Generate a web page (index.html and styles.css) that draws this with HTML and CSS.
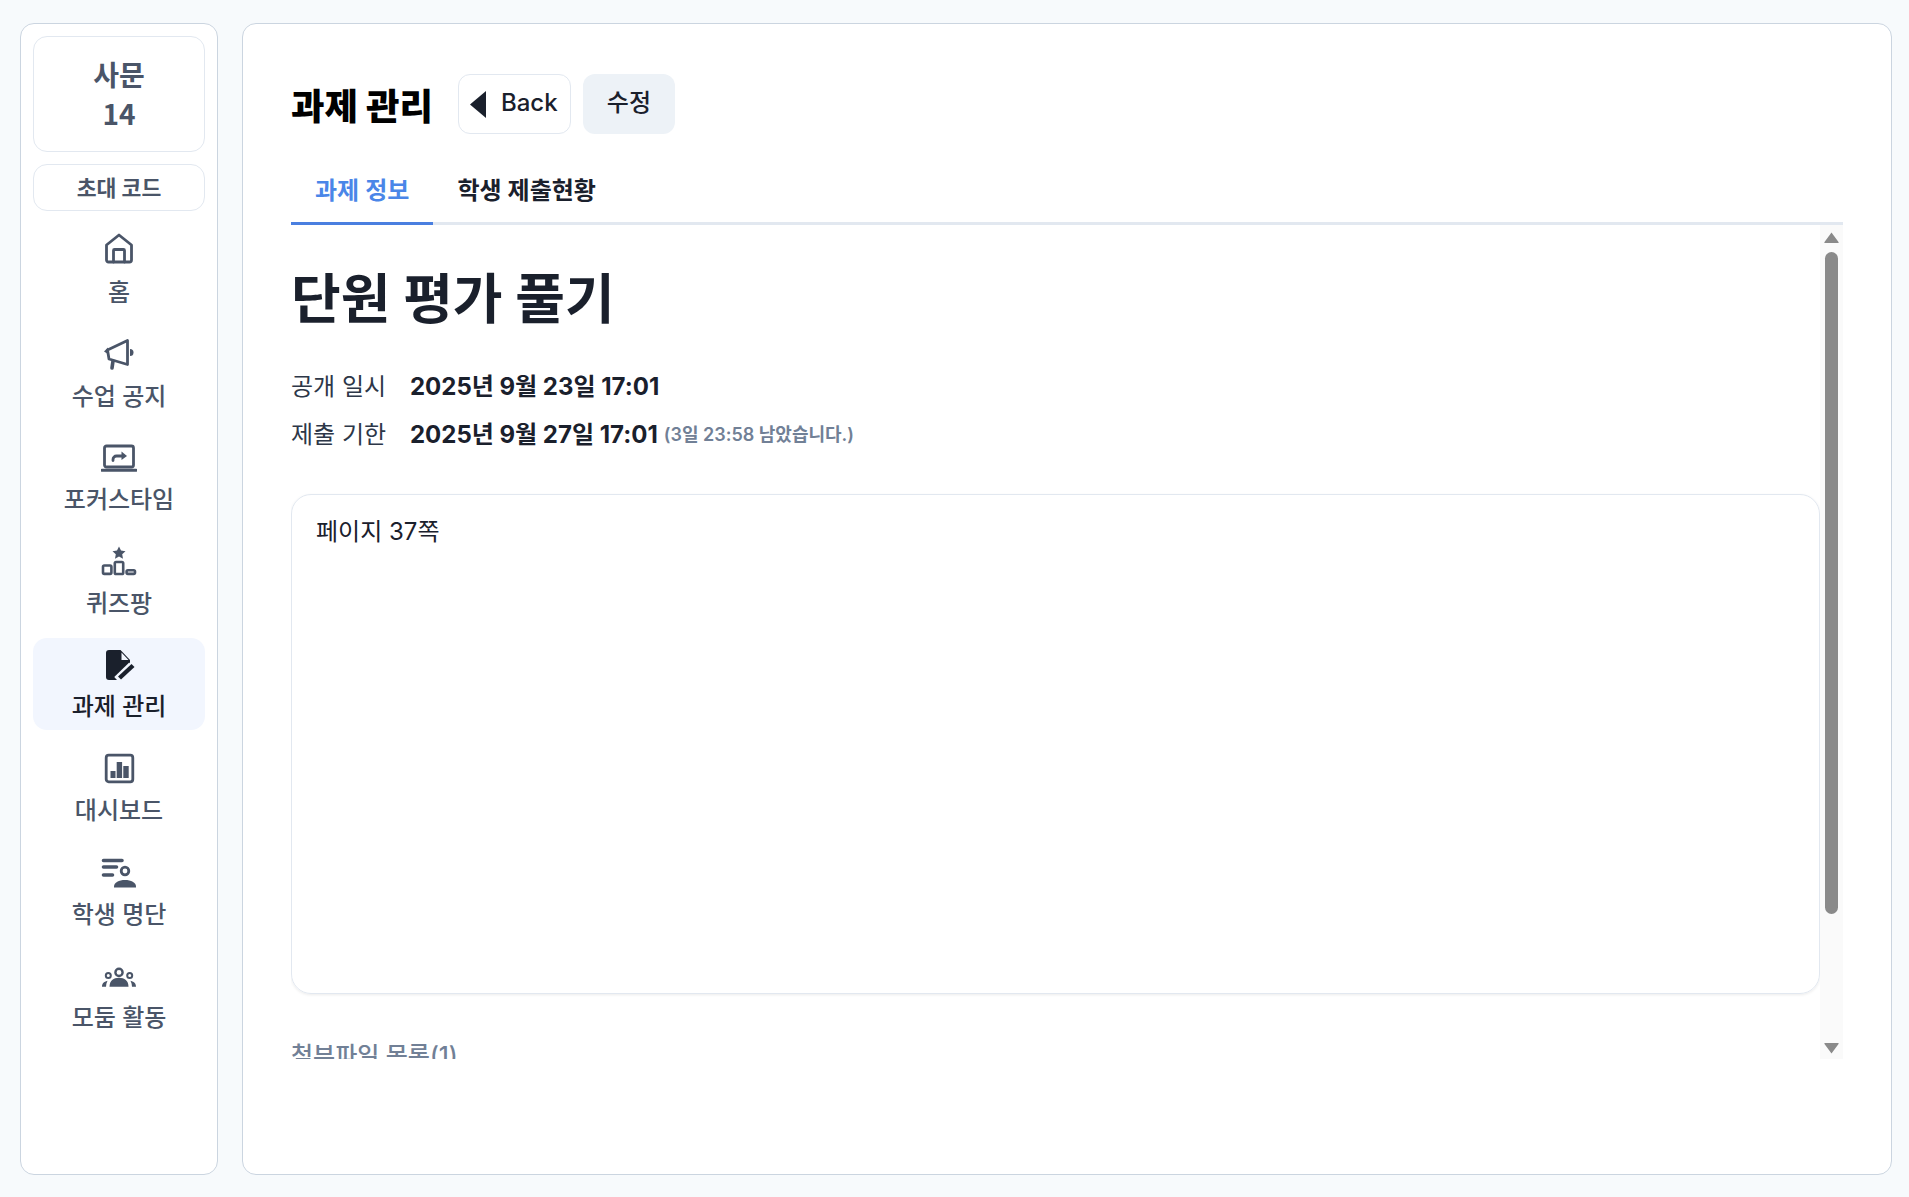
FILE: index.html
```html
<!DOCTYPE html>
<html lang="ko">

<head>
  <meta charset="UTF-8">
  <meta name="viewport" content="width=device-width, initial-scale=1.0">
  <title>과제 관리</title>
  <link rel="stylesheet" href="styles.css">
</head>

<body>
  <div class="layout">
    <aside class="sidebar">
      <div class="class-card">사문<br>14</div>
      <div class="code-card">초대 코드</div>
      <nav class="nav">
        <a class="nav-item">
          <svg class="nav-icon line" viewBox="0 0 36 36">
            <path d="M18 2 L30.5 12 V27 a2 2 0 0 1-2 2 H7.5 a2 2 0 0 1-2-2 V12 Z" />
            <path d="M12.5 29 V17.5 a1 1 0 0 1 1-1 h9 a1 1 0 0 1 1 1 V29" />
          </svg>
          <span>홈</span>
        </a>
        <a class="nav-item">
          <svg class="nav-icon line" viewBox="0 0 36 36">
            <path d="M6.5 13 L26.5 3.5 V27.5 L8 22 Z" />
            <path d="M12 24 L11 31" stroke-width="3.6" />
            <path class="solid" d="M7 10.5 L3 14.5 L7 17 Z" />
            <path class="solid" d="M29 12 a3.5 3.5 0 0 1 0 7 Z" />
          </svg>
          <span>수업 공지</span>
        </a>
        <a class="nav-item">
          <svg class="nav-icon line" viewBox="0 0 36 36">
            <rect x="3.5" y="6" width="29" height="21" rx="2" />
            <path d="M1 30.3 H35" stroke-width="3" />
            <path d="M12 20.5 v-1 a3.5 3.5 0 0 1 3.5-3.5 H21" />
            <path class="solid" d="M20.5 11.5 L26 16 L20.5 20 Z" />
          </svg>
          <span>포커스타임</span>
        </a>
        <a class="nav-item">
          <svg class="nav-icon line" viewBox="0 0 36 36">
            <path class="solid" d="M18 2.5 L20 6.6 L24.5 7.2 L21.2 10.3 L22 14.8 L18 12.6 L14 14.8 L14.8 10.3 L11.5 7.2 L16 6.6 Z" />
            <g stroke-width="2.6">
              <rect x="2" y="21.5" width="8.4" height="8.4" rx="1.3" />
              <rect x="13.8" y="18" width="8.4" height="12" rx="1.3" />
              <rect x="25.6" y="26.3" width="8.4" height="3.6" rx="1.3" />
            </g>
          </svg>
          <span>퀴즈팡</span>
        </a>
        <a class="nav-item active">
          <svg class="nav-icon" viewBox="0 0 36 36">
            <path d="M8 3 H19.5 L29 13 V20 L16 33 H8 a3 3 0 0 1-3-3 V6 a3 3 0 0 1 3-3 Z" />
            <path class="fold" d="M20.5 5.5 L27.5 13 H20.5 Z" />
            <path class="pen-gap" d="M16 33 L31 18.5" />
            <path class="pen" d="M18.5 31 L32 18.5" />
          </svg>
          <span>과제 관리</span>
        </a>
        <a class="nav-item">
          <svg class="nav-icon line" viewBox="0 0 36 36">
            <rect x="5.2" y="4.2" width="26.6" height="26.6" rx="2.5" />
            <path class="solid" d="M9.5 20 h5 v7 h-5 Z M15.7 11 h5.4 v16 h-5.4 Z M22.3 15 h5.4 v12 h-5.4 Z" />
          </svg>
          <span>대시보드</span>
        </a>
        <a class="nav-item">
          <svg class="nav-icon line" viewBox="0 0 36 36">
            <path d="M2.5 5.5 H21 M2.5 12 H15.5 M2.5 20 H11.5" stroke-width="3.6" />
            <circle cx="24" cy="16" r="3.8" />
            <path class="solid" d="M13 32.4 v-1 c0-4 5-6.5 11-6.5 s11 2.5 11 6.5 v1 Z" />
          </svg>
          <span>학생 명단</span>
        </a>
        <a class="nav-item">
          <svg class="nav-icon line" viewBox="0 0 36 36">
            <circle cx="18" cy="14.4" r="3.6" stroke-width="2.4" />
            <circle cx="7.3" cy="17.6" r="2.5" stroke-width="2" />
            <circle cx="28.7" cy="17.6" r="2.5" stroke-width="2" />
            <path class="solid" d="M8.5 28.7 c0-6 4-9 9.5-9 s9.5 3 9.5 9 Z" />
            <path class="solid" d="M1 28.7 c0-3 1.5-5 5.5-6 c-1 2-1.5 4-1.5 6 Z M35 28.7 c0-3-1.5-5-5.5-6 c1 2 1.5 4 1.5 6 Z" />
          </svg>
          <span>모둠 활동</span>
        </a>
      </nav>
    </aside>

    <main class="panel">
      <div class="panel-header">
        <h2>과제 관리</h2>
        <button class="btn btn-back">
          <svg class="back-icon" viewBox="0 0 16 27"><path d="M16 0 V27 L0 13.5 Z" /></svg>
          Back
        </button>
        <button class="btn btn-edit">수정</button>
      </div>

      <div class="tabs">
        <div class="tab active">과제 정보</div>
        <div class="tab">학생 제출현황</div>
      </div>

      <div class="tab-body">
        <div class="scroll">
          <h1>단원 평가 풀기</h1>
          <div class="date-row">
            <span class="date-label">공개 일시</span>
            <b>2025년 9월 23일 17:01</b>
          </div>
          <div class="date-row">
            <span class="date-label">제출 기한</span>
            <b>2025년 9월 27일 17:01</b>
            <small>(3일 23:58 남았습니다.)</small>
          </div>
          <div class="content-box">페이지 37쪽</div>
          <h3 class="files-title">첨부파일 목록(1)</h3>
        </div>
        <div class="scrollbar">
          <svg class="scroll-arrow" viewBox="0 0 15 11"><path d="M7.5 0.5 L14.5 10 a0.6 0.6 0 0 1-0.5 1 H1 a0.6 0.6 0 0 1-0.5-1 Z" /></svg>
          <div class="scroll-thumb"></div>
          <svg class="scroll-arrow down" viewBox="0 0 15 11"><path d="M7.5 10.5 L14.5 1 a0.6 0.6 0 0 0-0.5-1 H1 a0.6 0.6 0 0 0-0.5 1 Z" /></svg>
        </div>
      </div>
    </main>
  </div>
</body>

</html>
```

FILE: styles.css
```css
* {
  box-sizing: border-box;
}

body {
  margin: 0;
  background-color: #f7fafc;
  color: #1a202c;
  font-family: Inter, "Noto Sans CJK KR", sans-serif;
}

.layout {
  display: flex;
  gap: 24px;
  height: 1197px;
  padding: 23px 17px 22px 20px;
}

/* sidebar */
.sidebar {
  flex: 0 0 198px;
  padding: 12px;
  background-color: #fff;
  border: 1px solid #cbd5e0;
  border-radius: 14px;
}

.class-card {
  height: 116px;
  padding-top: 18px;
  border: 1px solid #e2e8f0;
  border-radius: 14px;
  color: #4a5568;
  font-family: "Noto Sans CJK KR", sans-serif;
  font-size: 28px;
  font-weight: 700;
  line-height: 39px;
  text-align: center;
}

.code-card {
  height: 47px;
  margin-top: 12px;
  border: 1px solid #e2e8f0;
  border-radius: 14px;
  color: #4a5568;
  font-size: 21.6px;
  font-weight: 700;
  line-height: 46px;
  text-align: center;
}

.nav {
  display: flex;
  flex-direction: column;
  gap: 12px;
  margin-top: 13px;
}

.nav-item {
  display: flex;
  flex-direction: column;
  align-items: center;
  height: 91.6px;
  padding-top: 9px;
  border-radius: 14px;
  color: #4a5568;
  font-size: 24px;
  font-weight: 500;
  line-height: 36px;
}

.nav-item span {
  margin-top: 6px;
}

.nav-item.active {
  background-color: #f2f6fe;
  color: #1a202c;
}

.nav-icon {
  display: block;
  flex: none;
  width: 36px;
  height: 36px;
  fill: #1a202c;
}

.nav-icon.line {
  fill: none;
  stroke: #4a5568;
  stroke-width: 2.8;
  stroke-linecap: round;
  stroke-linejoin: round;
}

.nav-icon .solid {
  fill: #4a5568;
  stroke: none;
}

.nav-icon .fold {
  fill: #f2f6fe;
}

.nav-icon .pen-gap {
  fill: none;
  stroke: #f2f6fe;
  stroke-width: 8;
}

.nav-icon .pen {
  fill: none;
  stroke: #1a202c;
  stroke-width: 4.4;
}

/* main panel */
.panel {
  flex: 1;
  padding: 50px 48px 0;
  background-color: #fff;
  border: 1px solid #cbd5e0;
  border-radius: 14px;
}

.panel-header {
  display: flex;
  align-items: center;
  gap: 12px;
  height: 60px;
}

.panel-header h2 {
  margin: 0 13px 0 0;
  color: #000;
  font-size: 36.4px;
  font-weight: 800;
}

.btn {
  height: 60px;
  border-radius: 12px;
  color: #1a202c;
  font-family: inherit;
  font-size: 24px;
  font-weight: 500;
}

.btn-back {
  display: flex;
  align-items: center;
  gap: 15px;
  width: 113px;
  padding: 0 0 3px 11px;
  background-color: #fff;
  border: 1px solid #e2e8f0;
}

.back-icon {
  flex: none;
  width: 16px;
  height: 27px;
  margin-top: 3px;
  fill: #1a202c;
}

.btn-edit {
  width: 92px;
  padding: 0 0 7px;
  background-color: #edf2f7;
  border: none;
}

.tabs {
  display: flex;
  margin-top: 20px;
  border-bottom: 3px solid #e2e8f0;
}

.tab {
  margin-bottom: -3px;
  padding: 19px 24px 13px;
  border-bottom: 3px solid transparent;
  font-size: 24px;
  font-weight: 600;
  line-height: 36px;
}

.tab.active {
  border-bottom-color: #4a7fe0;
  color: #4a86e8;
}

.tab-body {
  display: flex;
  height: 834px;
}

.scroll {
  flex: 1;
  min-width: 0;
  overflow: hidden;
}

.scrollbar {
  display: flex;
  flex: 0 0 23px;
  flex-direction: column;
  align-items: center;
  background-color: #fafafa;
}

.scroll-arrow {
  flex: none;
  width: 15px;
  height: 11px;
  margin-top: 7px;
  fill: #8a8a8a;
}

.scroll-arrow.down {
  margin-top: 129px;
}

.scroll-thumb {
  flex: none;
  width: 13px;
  height: 662px;
  margin-top: 9px;
  background-color: #8a8a8a;
  border-radius: 7px;
}

.scroll h1 {
  margin: 42px 0 28.5px;
  font-size: 54px;
  font-weight: 700;
  line-height: 65px;
}

.date-row {
  display: flex;
  align-items: center;
  height: 48px;
  font-size: 24px;
}

.date-label {
  flex: 0 0 119px;
  color: #2d3748;
}

.date-row b {
  font-weight: 700;
}

.date-row small {
  margin-left: 6px;
  color: #718096;
  font-size: 18px;
  font-weight: 600;
}

.content-box {
  height: 500px;
  margin-top: 37px;
  padding: 17px 24px;
  border: 1px solid #e2e8f0;
  border-radius: 20px;
  box-shadow: 0 1px 3px rgba(0, 0, 0, 0.08);
  font-size: 24px;
  line-height: 40px;
}

.files-title {
  margin: 44px 0 0;
  color: #718096;
  font-size: 24px;
  font-weight: 500;
  line-height: 36px;
}
```
